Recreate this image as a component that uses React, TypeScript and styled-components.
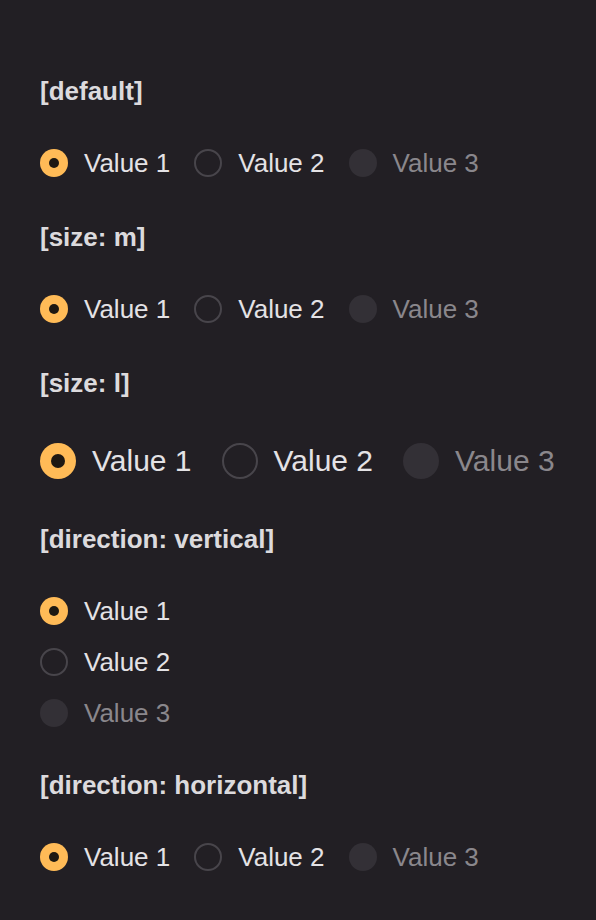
import React from 'react'
import styled, { createGlobalStyle } from 'styled-components'

const GlobalStyle = createGlobalStyle`
  html, body {
    margin: 0;
    padding: 0;
    background: #221f24;
  }
  body {
    font-family: "Liberation Sans", Arial, sans-serif;
  }
`

type Size = 'm' | 'l'
type Direction = 'horizontal' | 'vertical'

const sizes = {
  m: { control: 28, dot: 10, font: 26, gap: 24, offset: 0 },
  l: { control: 36, dot: 14, font: 30, gap: 30, offset: 2 },
}

const Page = styled.div`
  min-height: 920px;
  box-sizing: border-box;
  padding: 76px 40px 40px;
  display: flex;
  flex-direction: column;
  gap: 45px;
`

const Section = styled.section`
  display: flex;
  flex-direction: column;
  gap: 43px;
`

const Title = styled.div`
  font-size: 26px;
  line-height: 30px;
  font-weight: 700;
  color: #dcdadd;
`

const Group = styled.div<{ $size: Size; $direction: Direction }>`
  display: flex;
  flex-direction: ${(p) => (p.$direction === 'vertical' ? 'column' : 'row')};
  align-items: flex-start;
  gap: ${(p) => (p.$direction === 'vertical' ? 23 : sizes[p.$size].gap)}px;
  padding-top: ${(p) => sizes[p.$size].offset}px;
  margin-bottom: ${(p) => (p.$direction === 'vertical' ? -2 : 0)}px;
`

const Option = styled.label<{ $size: Size; $disabled?: boolean }>`
  display: flex;
  align-items: center;
  gap: 16px;
  height: ${(p) => sizes[p.$size].control}px;
  font-size: ${(p) => sizes[p.$size].font}px;
  color: ${(p) => (p.$disabled ? '#8a878c' : '#e4e2e5')};
  cursor: ${(p) => (p.$disabled ? 'default' : 'pointer')};
  white-space: nowrap;
`

const Control = styled.span<{ $size: Size; $checked?: boolean; $disabled?: boolean }>`
  box-sizing: border-box;
  flex: none;
  width: ${(p) => sizes[p.$size].control}px;
  height: ${(p) => sizes[p.$size].control}px;
  border-radius: 50%;
  display: flex;
  align-items: center;
  justify-content: center;
  background: ${(p) => (p.$checked ? '#ffbb57' : p.$disabled ? '#333036' : 'transparent')};
  border: ${(p) => (p.$checked || p.$disabled ? 'none' : '2px solid #48454b')};
`

const Dot = styled.span<{ $size: Size }>`
  width: ${(p) => sizes[p.$size].dot}px;
  height: ${(p) => sizes[p.$size].dot}px;
  border-radius: 50%;
  background: #1d1812;
`

type RadioProps = {
  size: Size
  label: string
  checked?: boolean
  disabled?: boolean
}

const Radio = ({ size, label, checked, disabled }: RadioProps) => (
  <Option $size={size} $disabled={disabled}>
    <Control $size={size} $checked={checked} $disabled={disabled}>
      {checked && <Dot $size={size} />}
    </Control>
    {label}
  </Option>
)

const RadioGroup = ({ size = 'm', direction = 'horizontal' }: { size?: Size; direction?: Direction }) => (
  <Group $size={size} $direction={direction}>
    <Radio size={size} label="Value 1" checked />
    <Radio size={size} label="Value 2" />
    <Radio size={size} label="Value 3" disabled />
  </Group>
)

const examples: { title: string; size?: Size; direction?: Direction }[] = [
  { title: '[default]' },
  { title: '[size: m]', size: 'm' },
  { title: '[size: l]', size: 'l' },
  { title: '[direction: vertical]', direction: 'vertical' },
  { title: '[direction: horizontal]', direction: 'horizontal' },
]

const App = () => (
  <>
    <GlobalStyle />
    <Page>
      {examples.map((ex) => (
        <Section key={ex.title}>
          <Title>{ex.title}</Title>
          <RadioGroup size={ex.size} direction={ex.direction} />
        </Section>
      ))}
    </Page>
  </>
)

export default App
